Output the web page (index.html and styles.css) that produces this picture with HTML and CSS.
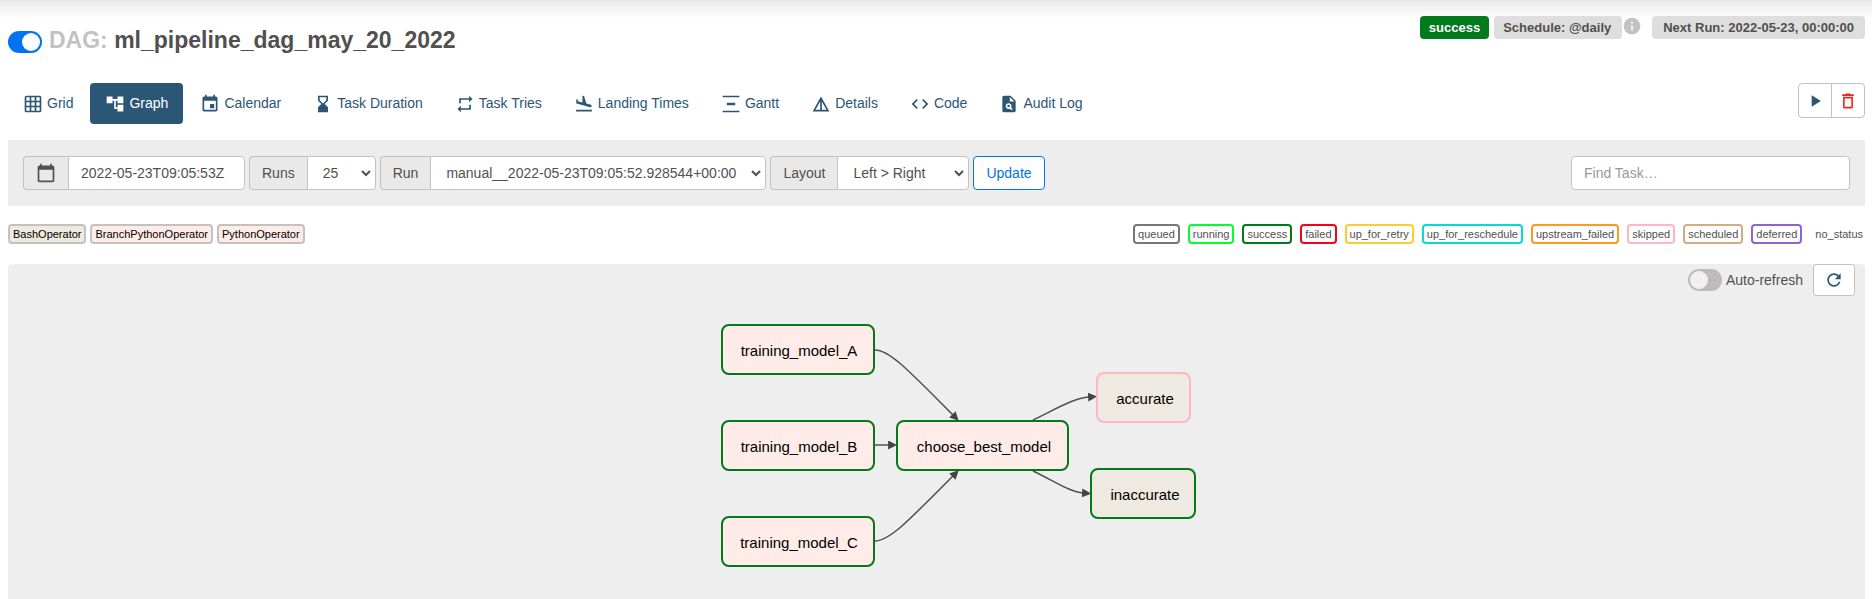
FILE: index.html
```html
<!DOCTYPE html>
<html lang="en">
<head>
<meta charset="utf-8">
<title>ml_pipeline_dag_may_20_2022 - Graph</title>
<link rel="stylesheet" href="styles.css">
</head>
<body>
<header class="header">
  <div class="heading">
    <input class="switch" type="checkbox" id="pause" aria-label="Pause or unpause DAG" checked>
    <h1 class="title"><span class="title-prefix">DAG:</span> ml_pipeline_dag_may_20_2022</h1>
  </div>
  <div class="labels">
    <a class="label label-success" href="#">success</a>
    <a class="label label-schedule" href="#">Schedule: @daily</a>
    <svg class="icon info" viewBox="0 0 24 24"><path d="M12 2C6.48 2 2 6.48 2 12s4.48 10 10 10 10-4.48 10-10S17.52 2 12 2zm1 15h-2v-6h2v6zm0-8h-2V7h2v2z"/></svg>
    <span class="label label-next">Next Run: 2022-05-23, 00:00:00</span>
  </div>
</header>

<div class="toolbar">
  <nav class="tabs">
    <a class="tab" href="#"><svg class="icon" viewBox="0 0 24 24"><path fill-rule="evenodd" d="M4 2h16a2 2 0 0 1 2 2v16a2 2 0 0 1-2 2H4a2 2 0 0 1-2-2V4a2 2 0 0 1 2-2zM4 4v4h4V4zM10 4v4h4V4zM16 4v4h4V4zM4 10v4h4v-4zM10 10v4h4v-4zM16 10v4h4v-4zM4 16v4h4v-4zM10 16v4h4v-4zM16 16v4h4v-4z"/></svg>Grid</a>
    <a class="tab tab-active" href="#" aria-current="page"><svg class="icon" viewBox="0 0 24 24"><path d="M22 11V3h-7v3H9V3H2v8h7V8h2v10h4v3h7v-8h-7v3h-2V8h2v3z"/></svg>Graph</a>
    <a class="tab" href="#"><svg class="icon" viewBox="0 0 24 24"><path d="M17 12h-5v5h5v-5zM16 1v2H8V1H6v2H5c-1.110 0-1.990.9-1.990 2L3 19c0 1.100.89 2 2 2h14c1.100 0 2-.9 2-2V5c0-1.100-.9-2-2-2h-1V1h-2zm3 18H5V8h14v11z"/></svg>Calendar</a>
    <a class="tab" href="#"><svg class="icon" viewBox="0 0 24 24"><path d="M18 22l-.01-6L14 12l3.990-4.010L18 2H6v6l4 4-4 3.990V22h12zM8 7.500V4h8v3.500l-4 4-4-4z"/></svg>Task Duration</a>
    <a class="tab" href="#"><svg class="icon" viewBox="0 0 24 24"><path d="M7 7h10v3l4-4-4-4v3H5v6h2V7zm10 10H7v-3l-4 4 4 4v-3h12v-6h-2v4z"/></svg>Task Tries</a>
    <a class="tab" href="#"><svg class="icon" viewBox="0 0 24 24"><path d="M2.500 19h19v2h-19zm7.180-5.730l4.350 1.160 5.310 1.420c.8.21 1.620-.26 1.840-1.060.21-.8-.26-1.620-1.060-1.840l-5.310-1.420-2.760-9.020L10.120 2v8.280L5.150 8.950l-.93-2.320-1.450-.39v5.170l1.600.43 5.310 1.430z"/></svg>Landing Times</a>
    <a class="tab" href="#"><svg class="icon" viewBox="0 0 24 24"><path d="M22 2v2H2V2h20zM7 10.500v3h10v-3H7zM2 20v2h20v-2H2z"/></svg>Gantt</a>
    <a class="tab" href="#"><svg class="icon" viewBox="0 0 24 24"><path d="M12 3L2 21h20L12 3zm1 5.920L18.600 19H13V8.920zm-2 0V19H5.400L11 8.920z"/></svg>Details</a>
    <a class="tab" href="#"><svg class="icon" viewBox="0 0 24 24"><path d="M9.400 16.600L4.800 12l4.600-4.600L8 6l-6 6 6 6 1.400-1.400zm5.200 0l4.600-4.600-4.600-4.600L16 6l6 6-6 6-1.400-1.400z"/></svg>Code</a>
    <a class="tab" href="#"><svg class="icon" viewBox="0 0 24 24"><path fill-rule="evenodd" d="M14 2H6a2 2 0 0 0-2 2v16a2 2 0 0 0 2 2h12a2 2 0 0 0 2-2V8l-6-6zM13 9V3.500L18.500 9zM15.040 19.450l-1.880-1.880a3.500 3.500 0 1 1 1.410-1.410l1.880 1.880zM11.500 13a1.500 1.500 0 1 0 0 3 1.500 1.500 0 0 0 0-3z"/></svg>Audit Log</a>
  </nav>
  <div class="actions">
    <button class="action" type="button" aria-label="Trigger DAG"><svg class="icon" viewBox="0 0 24 24"><path d="M8 5v14l11-7z"/></svg></button>
    <button class="action action-delete" type="button" aria-label="Delete DAG"><svg class="icon" viewBox="0 0 24 24"><path d="M6 19c0 1.100.9 2 2 2h8c1.100 0 2-.9 2-2V7H6v12zM8 9h8v10H8V9zm7.500-5l-1-1h-5l-1 1H5v2h14V4h-3.500z"/></svg></button>
  </div>
</div>

<form class="filters">
  <div class="group">
    <label class="addon" for="base-date" aria-label="Base date"><svg class="icon" viewBox="0 0 24 24"><path d="M20 3h-1V1h-2v2H7V1H5v2H4c-1.100 0-2 .9-2 2v16c0 1.100.9 2 2 2h16c1.100 0 2-.9 2-2V5c0-1.100-.9-2-2-2zm0 18H4V8h16v13z"/></svg></label>
    <input class="field field-date" id="base-date" type="text" value="2022-05-23T09:05:53Z">
  </div>
  <div class="group">
    <label class="addon" for="runs">Runs</label>
    <select class="field select field-runs" id="runs"><option>25</option></select>
  </div>
  <div class="group">
    <label class="addon" for="run">Run</label>
    <select class="field select field-run" id="run"><option>manual__2022-05-23T09:05:52.928544+00:00</option></select>
  </div>
  <div class="group">
    <label class="addon" for="layout">Layout</label>
    <select class="field select field-layout" id="layout"><option>Left &gt; Right</option></select>
  </div>
  <button class="update" type="button">Update</button>
  <input class="search" type="search" placeholder="Find Task…" aria-label="Find Task">
</form>

<div class="legend">
  <div class="operators">
    <span class="chip operator bash">BashOperator</span>
    <span class="chip operator python">BranchPythonOperator</span>
    <span class="chip operator python">PythonOperator</span>
  </div>
  <div class="states">
    <span class="chip queued">queued</span>
    <span class="chip running">running</span>
    <span class="chip success">success</span>
    <span class="chip failed">failed</span>
    <span class="chip retry">up_for_retry</span>
    <span class="chip reschedule">up_for_reschedule</span>
    <span class="chip upstream">upstream_failed</span>
    <span class="chip skipped">skipped</span>
    <span class="chip scheduled">scheduled</span>
    <span class="chip deferred">deferred</span>
    <span class="chip none">no_status</span>
  </div>
</div>

<main class="graph">
  <svg class="dag" viewBox="656 264 560 320">
    <defs>
      <marker id="arrow" viewBox="0 0 10 10" refX="1" refY="5" markerWidth="9" markerHeight="9" markerUnits="userSpaceOnUse" orient="auto"><path class="arrow" d="M0 0L10 5L0 10z"/></marker>
    </defs>
    <g class="edges">
      <path d="M874 350C889 350 910 373 952 415"/>
      <path d="M874 445H888"/>
      <path d="M874 541C889 541 910 518 952 476"/>
      <path d="M1032 420C1055 409 1073 398 1088 397"/>
      <path d="M1032 471C1055 482 1069 492 1082 493"/>
    </g>
    <g class="node python success"><rect x="721" y="325" width="152" height="49" rx="7"/><text x="798" y="356">training_model_A</text></g>
    <g class="node python success"><rect x="721" y="421" width="152" height="49" rx="7"/><text x="798" y="452">training_model_B</text></g>
    <g class="node python success"><rect x="721" y="517" width="152" height="49" rx="7"/><text x="798" y="548">training_model_C</text></g>
    <g class="node python success"><rect x="896" y="421" width="171" height="49" rx="7"/><text x="983" y="452">choose_best_model</text></g>
    <g class="node bash skipped"><rect x="1096" y="373" width="93" height="49" rx="7"/><text x="1144" y="404">accurate</text></g>
    <g class="node bash success"><rect x="1090" y="469" width="104" height="49" rx="7"/><text x="1144" y="500">inaccurate</text></g>
  </svg>
  <div class="refresh">
    <input class="switch" type="checkbox" id="auto-refresh">
    <label for="auto-refresh">Auto-refresh</label>
    <button class="refresh-button" type="button" aria-label="Refresh"><svg class="icon" viewBox="0 0 24 24"><path d="M17.650 6.350C16.200 4.900 14.210 4 12 4c-4.420 0-7.990 3.580-7.990 8s3.570 8 7.990 8c3.730 0 6.840-2.550 7.730-6h-2.080c-.82 2.330-3.040 4-5.650 4-3.310 0-6-2.690-6-6s2.690-6 6-6c1.660 0 3.140.69 4.220 1.780L13 11h7V4l-2.350 2.350z"/></svg></button>
  </div>
</main>
</body>
</html>
```
FILE: styles.css
```css
* { box-sizing: border-box; }

body {
  display: flex;
  flex-direction: column;
  min-height: 100vh;
  margin: 0;
  padding: 0 7px 0 8px;
  background: linear-gradient(#e8e8e8, #fff 18px) no-repeat #fff;
  color: #51504f;
  font-family: "Liberation Sans", Arial, sans-serif;
  font-size: 14px;
  line-height: 20px;
}

input, select, button { margin: 0; color: inherit; font: inherit; }

a { color: inherit; text-decoration: none; }

.icon { display: block; flex: none; width: 20px; height: 20px; fill: currentColor; }

.header { display: flex; justify-content: space-between; align-items: flex-start; padding-top: 16px; }

.heading { display: flex; align-items: center; gap: 7px; padding-top: 10px; }

.title { margin: 0; font-size: 23px; line-height: 28px; }
.title-prefix { color: #c4c2c1; }

.switch {
  appearance: none;
  flex: none;
  width: 34px;
  height: 22px;
  padding: 2px;
  border-radius: 11px;
  background: #bfbbba;
}
.switch::before { content: ""; display: block; width: 18px; height: 18px; border-radius: 9px; background: #f0f0f0; }
.switch:checked { background: #0073f0; }
.switch:checked::before { margin-left: 12px; background: #fff; }
.heading .switch { margin-top: 4px; }

.labels { display: flex; align-items: flex-start; }
.label { padding: 0 9px; border-radius: 4px; background: #dedede; font-size: 13px; font-weight: bold; line-height: 23px; }
.label-success { margin-right: 5px; background: #017a1b; color: #fff; }
.label-schedule { padding-right: 11px; }
.label-next { padding: 0 11px; }
.info { margin-right: 10px; color: #c4c2c1; }

.toolbar { display: flex; justify-content: space-between; align-items: flex-start; margin-top: 29px; }
.tabs { display: flex; gap: 2px; }
.tab { display: flex; align-items: center; gap: 4px; padding: 10px 15px; border-radius: 4px; color: #2b5676; line-height: 21px; }
.tab-active { background: #2b5676; color: #fff; }

.actions { display: flex; }
.action { display: flex; align-items: center; justify-content: center; width: 34px; height: 35px; padding: 0; border: 1px solid #c4c2c1; border-radius: 4px 0 0 4px; background: #fff; color: #2b5676; }
.action-delete { margin-left: -1px; border-radius: 0 4px 4px 0; color: #ee2a24; }

.filters { display: flex; align-items: center; gap: 4px; margin-top: 16px; padding: 16px 15px; background: #ededed; }
.group { display: flex; }
.addon { display: flex; align-items: center; padding: 0 12px; border: 1px solid #c4c2c1; border-right: 0; border-radius: 4px 0 0 4px; background: #e9e9e9; }
.field { height: 34px; padding: 6px 12px; border: 1px solid #c4c2c1; border-radius: 0 4px 4px 0; background-color: #fff; }
.select {
  appearance: none;
  padding-left: 15px;
  background-image: url("data:image/svg+xml,%3Csvg xmlns='http://www.w3.org/2000/svg' width='10' height='7' viewBox='0 0 10 7'%3E%3Cpath d='M1 1l4 4 4-4' fill='none' stroke='%2351504f' stroke-width='2'/%3E%3C/svg%3E");
  background-repeat: no-repeat;
  background-position: right 4px center;
}
.field-date { width: 177px; }
.field-runs { width: 69px; }
.field-run { width: 336px; }
.field-layout { width: 132px; }
.update { height: 34px; padding: 0 12px; border: 1px solid #0073f0; border-radius: 4px; background: #fff; color: #0073f0; }
.search { width: 279px; height: 34px; margin-left: auto; padding: 6px 12px; border: 1px solid #c4c2c1; border-radius: 4px; background: #fff; }
.search::placeholder { color: #999; }

.legend { display: flex; justify-content: space-between; margin: 18px 0 20px; }
.operators { display: flex; gap: 4px; }
.states { display: flex; gap: 8px; }
.chip { padding: 0 3px; border: 2px solid #c4c2c1; border-radius: 4px; font-size: 11px; line-height: 16px; }
.operator { color: #000; }
.bash { background: #eeeae1; fill: #eeeae1; }
.python { background: #ffece8; fill: #ffece8; }
.queued { border-color: #777; }
.running { border-color: #01ff2f; }
.success { border-color: #017a1b; stroke: #017a1b; }
.failed { border-color: #fb0019; }
.retry { border-color: #fccc30; }
.reschedule { border-color: #05dccb; }
.upstream { border-color: #fc9a24; }
.skipped { border-color: #ffb5c2; stroke: #ffb5c2; }
.scheduled { border-color: #d0ad83; }
.deferred { border-color: #9063d3; }
.none { padding-right: 0; border-color: transparent; }

.graph { position: relative; flex: 1; display: flex; justify-content: center; align-items: flex-start; border-radius: 4px 4px 0 0; background: #eee; }
.dag { display: block; width: 560px; height: 320px; }
.edges { fill: none; stroke: #51504f; stroke-width: 1.5px; }
.edges path { marker-end: url(#arrow); }
.arrow { fill: #444; stroke: none; }
.node rect { stroke-width: 2px; }
.node text { fill: #000; stroke: none; font-size: 15px; text-anchor: middle; }

/* Floats over the canvas so that the graph can use the full area */
.refresh { position: absolute; top: 0; right: 10px; display: flex; align-items: center; gap: 4px; }
.refresh-button { display: flex; align-items: center; justify-content: center; width: 42px; height: 32px; margin-left: 6px; padding: 0; border: 1px solid #c4c2c1; border-radius: 3px; background: #fff; color: #2b5676; }
```
